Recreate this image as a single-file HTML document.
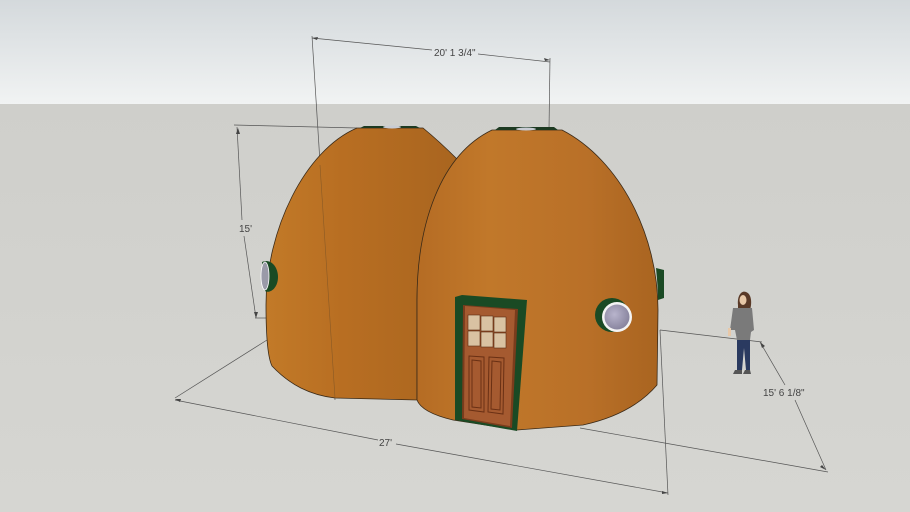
<!DOCTYPE html>
<html><head><meta charset="utf-8"><style>
html,body{margin:0;padding:0;width:910px;height:512px;overflow:hidden;background:#d1d1cd}
svg{display:block}
text{font-family:"Liberation Sans",sans-serif;font-size:10px;fill:#444}
</style></head><body>
<svg width="910" height="512" viewBox="0 0 910 512" xmlns="http://www.w3.org/2000/svg">
<defs>
<linearGradient id="sky" x1="0" y1="0" x2="0" y2="1">
<stop offset="0" stop-color="#d4d9dc"/><stop offset="1" stop-color="#f1f3f3"/></linearGradient>
<linearGradient id="ground" x1="0" y1="0" x2="0" y2="1">
<stop offset="0" stop-color="#cfcfcb"/><stop offset="1" stop-color="#d6d6d2"/></linearGradient>
<linearGradient id="domeL" x1="0" y1="0" x2="1" y2="0">
<stop offset="0" stop-color="#c27a28"/><stop offset="0.4" stop-color="#b86e22"/><stop offset="1" stop-color="#a9651f"/></linearGradient>
<linearGradient id="domeR" x1="0" y1="0" x2="1" y2="0">
<stop offset="0" stop-color="#b56c24"/><stop offset="0.3" stop-color="#c1782a"/><stop offset="0.7" stop-color="#b97028"/><stop offset="1" stop-color="#a96420"/></linearGradient>
<radialGradient id="glass" cx="0.4" cy="0.4" r="0.6"><stop offset="0" stop-color="#b8b4cc"/><stop offset="1" stop-color="#8a86a0"/></radialGradient>
</defs>
<rect width="910" height="104" fill="url(#sky)"/>
<rect y="104" width="910" height="408" fill="url(#ground)"/>

<g stroke="#555" stroke-width="0.7" fill="none">
<line x1="312" y1="38" x2="432" y2="50"/><line x1="478" y1="54" x2="550" y2="62"/>
<line x1="312" y1="36" x2="335" y2="400"/>
<line x1="550" y1="58" x2="549" y2="130"/>
<line x1="234" y1="125" x2="357" y2="128"/>
<line x1="237" y1="127" x2="242" y2="220"/><line x1="244" y1="236" x2="256" y2="318"/>
<line x1="255" y1="318" x2="268" y2="318"/>
<line x1="175" y1="398" x2="267" y2="340"/>
<line x1="175" y1="400" x2="378" y2="440"/><line x1="396" y1="444" x2="668" y2="493"/>
<line x1="660" y1="330" x2="668" y2="495"/>
<line x1="660" y1="330" x2="762" y2="342"/>
<line x1="760" y1="342" x2="785" y2="385"/><line x1="795" y1="400" x2="826" y2="470"/>
<line x1="580" y1="428" x2="828" y2="472"/>
</g>
<g fill="#444">
<path d="M312 38 l6 -1 l-1 3z"/><path d="M550 60 l-6 -2 l1 3z"/>
<path d="M238 128 l-2 6 l4 0z"/><path d="M256 318 l-2 -6 l4 0z"/>
<path d="M175 399 l6 0 l-1 3z"/><path d="M668 493 l-6 -2 l0 3z"/>
<path d="M760 342 l2 6 l3 -2z"/><path d="M826 470 l-4 -5 l-2 2z"/>
</g>
<text x="434" y="56">20' 1 3/4"</text>
<text x="239" y="232">15'</text>
<text x="379" y="446">27'</text>
<text x="763" y="396">15' 6 1/8"</text>

<!-- left dome -->
<path d="M357 128 C305 150 266 230 266 305 C266 340 268 358 272 366 C290 385 310 395 335 398 L417 400 L417 300 C418 240 435 190 458 160 C446 148 434 137 423 128Z" fill="url(#domeL)" stroke="#3a2a18" stroke-width="0.8"/>
<line x1="320" y1="165" x2="335" y2="398" stroke="#8a5a25" stroke-width="0.6"/>
<path d="M360 128 L420 128 L416 126 L364 126Z" fill="#1d3a22"/>
<path d="M262 262 C270 258 278 266 278 277 C278 288 270 294 265 291 Z" fill="#1a4a24"/>
<ellipse cx="265" cy="276" rx="4" ry="14" fill="#9a9aa8" stroke="#fff" stroke-width="0.8"/>

<!-- right dome -->
<path d="M492 130 L562 130 C620 160 658 235 658 310 L657 385 C640 405 615 418 583 425 L517 430 L453 420 C432 415 420 408 417 400 L417 300 C417 225 440 155 492 130Z" fill="url(#domeR)" stroke="#3a2a18" stroke-width="0.8"/>
<path d="M495 130 L558 130 L554 127 L499 127Z" fill="#1d3a22"/>
<ellipse cx="526" cy="129" rx="10" ry="1.5" fill="#c8ccd4"/>
<ellipse cx="392" cy="127" rx="9" ry="1.5" fill="#c8ccd4"/>
<path d="M656 268 L664 270 L664 298 L658 300 C658 290 657 278 656 268Z" fill="#1a4a24"/>

<circle cx="612" cy="315" r="17" fill="#1a4a24"/>
<circle cx="617" cy="317" r="15" fill="#f4f4f4"/>
<circle cx="617" cy="317" r="12.5" fill="url(#glass)"/>

<!-- door -->
<path d="M455 297 L462 295 L527 300 L517 431 L455 420Z" fill="#1a4a24"/>
<path d="M463 305 L518 309 L512 428 L462 419Z" fill="#7a3c1c"/>
<path d="M465 306 L515 310 L510 426 L464 418Z" fill="#a55a30"/>
<g fill="#d9c2a2" stroke="#5a2a10" stroke-width="0.6">
<rect x="468" y="315" width="12" height="15"/><rect x="481" y="316" width="12" height="15"/><rect x="494" y="317" width="12" height="15"/>
<rect x="468" y="331" width="12" height="15"/><rect x="481" y="332" width="12" height="15"/><rect x="494" y="333" width="12" height="15"/>
</g>
<g fill="none" stroke="#6a3014" stroke-width="1">
<path d="M469 356 L484 357 L484 412 L469 410Z"/><path d="M489 357 L504 358 L503 414 L488 412Z"/>
<path d="M472 360 L481 361 L481 408 L472 407Z"/><path d="M492 361 L501 362 L500 410 L491 409Z"/>
</g>

<!-- person -->
<path d="M738 305 C737 295 742 290 746 292 C752 294 752 304 750 310 L738 310Z" fill="#5a3a28"/>
<ellipse cx="743" cy="300" rx="3.5" ry="5" fill="#e8c8a8"/>
<path d="M733 308 L752 308 L754 330 L751 332 L750 340 L737 340 L735 330 L730 330Z" fill="#7a7a7a"/>
<path d="M737 340 L750 340 L750 370 L746 370 L744 348 L742 370 L737 370Z" fill="#2a3a60"/>
<rect x="728" y="328" width="3" height="8" fill="#e8c8a8"/>
<path d="M735 370 L742 370 L742 374 L733 374Z" fill="#555"/>
<path d="M745 370 L750 370 L751 374 L743 374Z" fill="#555"/>
</svg>
</body></html>
